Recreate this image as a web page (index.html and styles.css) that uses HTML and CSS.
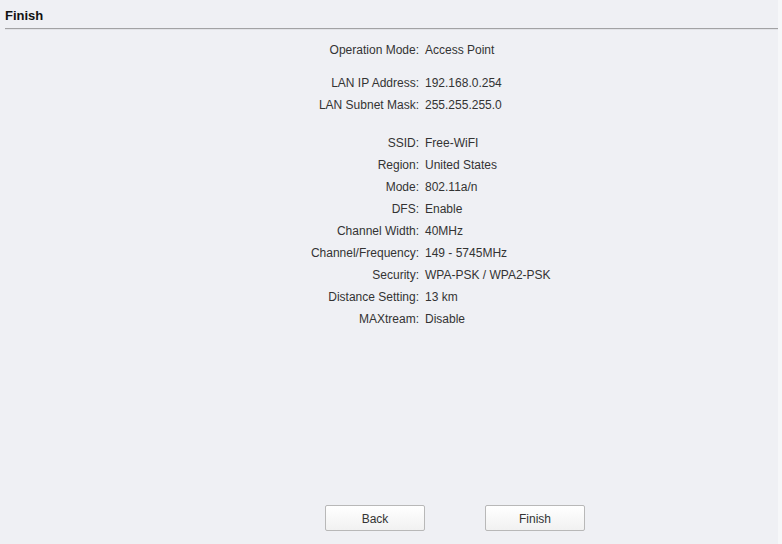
FILE: index.html
```html
<!DOCTYPE html>
<html lang="en">
<head>
    <meta charset="UTF-8">
    <meta name="viewport" content="width=device-width, initial-scale=1.0">
    <title>Finish</title>
<link rel="stylesheet" href="styles.css">
</head>
<body>
<div class="page">
<div class="panel">
    <div class="panelTitle">Finish</div>

    <div class="summary">
        <div class="group">
            <div class="label">Operation Mode:</div><div class="value">Access Point</div>
        </div>
        <div class="group">
            <div class="label">LAN IP Address:</div><div class="value">192.168.0.254</div>
            <div class="label">LAN Subnet Mask:</div><div class="value">255.255.255.0</div>
        </div>
        <div class="group">
            <div class="label">SSID:</div><div class="value">Free-WiFI</div>
            <div class="label">Region:</div><div class="value">United States</div>
            <div class="label">Mode:</div><div class="value">802.11a/n</div>
            <div class="label">DFS:</div><div class="value">Enable</div>
            <div class="label">Channel Width:</div><div class="value">40MHz</div>
            <div class="label">Channel/Frequency:</div><div class="value">149 - 5745MHz</div>
            <div class="label">Security:</div><div class="value">WPA-PSK / WPA2-PSK</div>
            <div class="label">Distance Setting:</div><div class="value">13 km</div>
            <div class="label">MAXtream:</div><div class="value">Disable</div>
        </div>
    </div>

    <div class="buttons">
        <button class="btn" type="button">Back</button>
        <button class="btn" type="button">Finish</button>
    </div>
</div>
<div class="edge"></div>
</div>
</body>
</html>
```

FILE: styles.css
```css
body{
    margin: 0;
    background-color: #eff0f4;
    font-family: "Liberation Sans", Arial, sans-serif;
    font-size: 12px;
    color: #333;
}
.page{
    display: flex;
    height: 100vh;
}
.panel{
    width: 778px;
    display: flex;
    flex-direction: column;
}
.edge{
    flex: 1;
    background-color: #f6f7f9;
}
.panelTitle{
    margin-left: 5px;
    height: 28px;
    line-height: 32px;
    font-size: 13px;
    font-weight: bold;
    color: #111;
    border-bottom: 1px solid #a2a2a4;
    box-shadow: 0 1px 0 #e2e3e7;
}
.summary{
    padding-top: 10px;
    display: flex;
    flex-direction: column;
}
.group{
    display: grid;
    grid-template-columns: 419px auto;
    column-gap: 6px;
    grid-auto-rows: 22px;
    line-height: 22px;
}
.group + .group{
    margin-top: 11px;
}
.group:last-child{
    margin-top: 16px;
}
.label{
    text-align: right;
}
.buttons{
    margin-top: auto;
    margin-bottom: 13px;
    padding-left: 325px;
    display: flex;
    gap: 60px;
}
.btn{
    width: 100px;
    height: 26px;
    font-family: inherit;
    font-size: 12px;
    color: #333;
    background: linear-gradient(#ffffff, #f1f1f1);
    border: 1px solid #b8b8b8;
    border-radius: 2px;
    padding: 1px 0 0;
    cursor: pointer;
}
.btn:hover{
    background: linear-gradient(#ffffff, #e6e6e6);
}
```
